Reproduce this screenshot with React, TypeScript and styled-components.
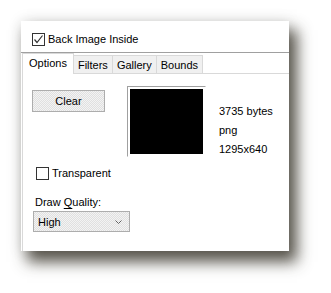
import React from "react";
import styled, { createGlobalStyle } from "styled-components";

const Global = createGlobalStyle`
  html, body { margin: 0; padding: 0; background: #ffffff; }
  body { font-family: "Liberation Sans", Arial, sans-serif; font-size: 11px; color: #000; min-height: 293px; }
`;

const Page = styled.div`
  padding: 21px 0 0 21px;
`;

const Window = styled.div`
  width: 268px;
  height: 230px;
  background: #ffffff;
  overflow: hidden;
  box-shadow: 7px 10px 14px 1px rgba(60, 56, 46, 0.85), 0 0 14px rgba(0, 0, 0, 0.1);
`;

const Header = styled.div`
  height: 32px;
  box-sizing: border-box;
  padding: 12px 0 0 11px;
  border-bottom: 1px solid #a0a0a0;
`;

const CheckRow = styled.label<{ $indent?: number }>`
  display: flex;
  align-items: flex-start;
  gap: 3px;
  margin-left: ${(p) => p.$indent ?? 0}px;
  line-height: 13px;
  white-space: nowrap;
`;

const Box = styled.span`
  width: 13px;
  height: 13px;
  box-sizing: border-box;
  border: 1px solid #333333;
  background: #ffffff;
  display: flex;
  align-items: center;
  justify-content: center;
  flex: none;
`;

const TabStrip = styled.div`
  display: flex;
  align-items: flex-end;
  height: 20px;
  padding-left: 1px;
  position: relative;
  z-index: 1;
`;

const Tab = styled.div<{ $active?: boolean }>`
  box-sizing: border-box;
  height: ${(p) => (p.$active ? 21 : 18)}px;
  margin-bottom: ${(p) => (p.$active ? -1 : 0)}px;
  padding: 0 ${(p) => (p.$active ? 6 : 4)}px;
  padding-bottom: ${(p) => (p.$active ? 2 : 0)}px;
  border: 1px solid #d9d9d9;
  border-bottom: none;
  background: ${(p) => (p.$active ? "#ffffff" : "#f0f0f0")};
  display: flex;
  align-items: center;
  & + & { margin-left: -1px; }
`;

const TabPage = styled.div`
  margin-left: 1px;
  border-top: 1px solid #d9d9d9;
  border-left: 1px solid #d9d9d9;
  padding: 12px 0 0 9px;
  height: 200px;
`;

const TopRow = styled.div`
  display: flex;
  align-items: flex-start;
`;

const Button = styled.div`
  margin-top: 4px;
  width: 73px;
  height: 22px;
  box-sizing: border-box;
  border: 1px solid #adadad;
  background: repeating-conic-gradient(#e0e0e0 0 25%, #f3f3f3 0 50%) 0 0 / 2px 2px;
  display: flex;
  align-items: center;
  justify-content: center;
`;

const Frame = styled.div`
  margin-left: 22px;
  padding: 2px;
  border-top: 1px solid #a0a0a0;
  border-left: 1px solid #a0a0a0;
  border-right: 1px solid #ffffff;
  border-bottom: 1px solid #ffffff;
`;

const Picture = styled.div`
  width: 73px;
  height: 65px;
  background: #000000;
`;

const Info = styled.div`
  margin: 16px 0 0 13px;
  line-height: 19px;
`;

const Spacer = styled.div<{ $h: number }>`
  height: ${(p) => p.$h}px;
`;

const Label = styled.div`
  margin-left: 3px;
  line-height: 13px;
  & u { text-decoration-thickness: 1px; text-underline-offset: 2px; }
`;

const Select = styled.div`
  margin: 2px 0 0 1px;
  width: 97px;
  height: 21px;
  box-sizing: border-box;
  border: 1px solid #adadad;
  background: repeating-conic-gradient(#e0e0e0 0 25%, #f3f3f3 0 50%) 0 0 / 2px 2px;
  display: flex;
  align-items: center;
  justify-content: space-between;
  padding: 0 7px 0 4px;
`;

const Check = ({ checked }: { checked?: boolean }) => (
  <Box>
    {checked && (
      <svg width="11" height="11" viewBox="0 0 11 11">
        <polyline points="1.5,5.5 4,8.5 9.5,1.5" fill="none" stroke="#333" strokeWidth="1.2" />
      </svg>
    )}
  </Box>
);

export default function App() {
  return (
    <Page>
      <Global />
      <Window>
        <Header>
          <CheckRow>
            <Check checked />
            <span>Back Image Inside</span>
          </CheckRow>
        </Header>
        <TabStrip>
          <Tab $active>Options</Tab>
          <Tab>Filters</Tab>
          <Tab>Gallery</Tab>
          <Tab>Bounds</Tab>
        </TabStrip>
        <TabPage>
          <TopRow>
            <Button>Clear</Button>
            <Frame>
              <Picture />
            </Frame>
            <Info>
              <div>3735 bytes</div>
              <div>png</div>
              <div>1295x640</div>
            </Info>
          </TopRow>
          <Spacer $h={8} />
          <CheckRow $indent={4}>
            <Check />
            <span>Transparent</span>
          </CheckRow>
          <Spacer $h={16} />
          <Label>
            Draw <u>Q</u>uality:
          </Label>
          <Select>
            <span>High</span>
            <svg width="7" height="4" viewBox="0 0 7 4">
              <polyline points="0.5,0.5 3.5,3.5 6.5,0.5" fill="none" stroke="#606060" strokeWidth="1" />
            </svg>
          </Select>
        </TabPage>
      </Window>
    </Page>
  );
}
